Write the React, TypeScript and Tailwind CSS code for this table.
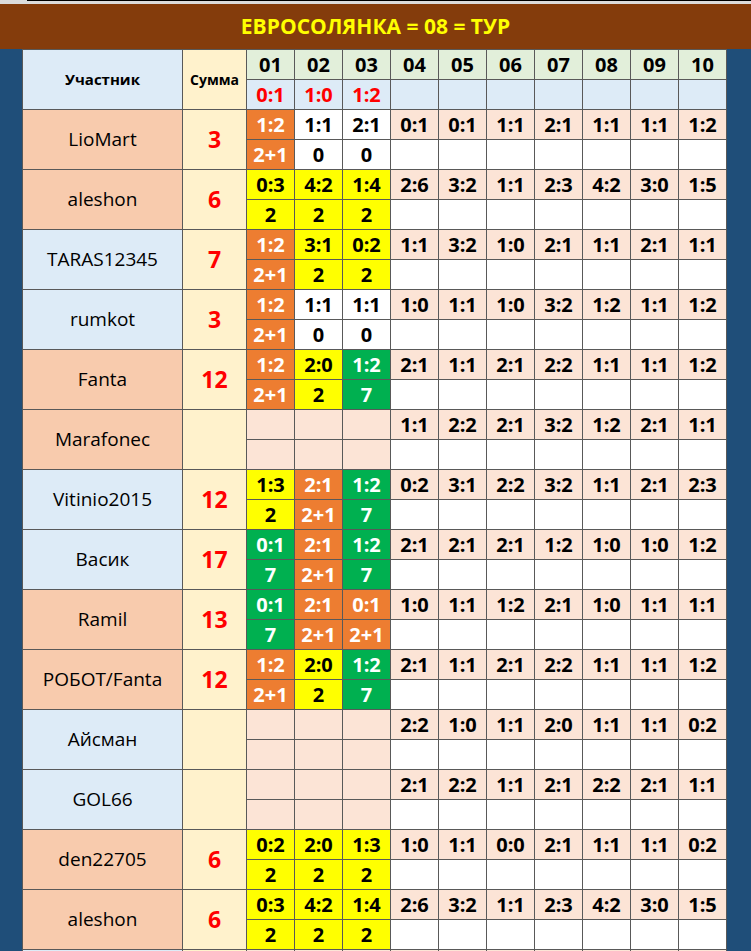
import React from "react";

type Row = {
  name: string;
  sum: string;
  peach: boolean;
  first: [string, string][] | null;
  rest: string[];
};

const rows: Row[] = [
  { name: "LioMart", sum: "3", peach: true, first: [["1:2", "2+1"], ["1:1", "0"], ["2:1", "0"]], rest: ["0:1", "0:1", "1:1", "2:1", "1:1", "1:1", "1:2"] },
  { name: "aleshon", sum: "6", peach: true, first: [["0:3", "2"], ["4:2", "2"], ["1:4", "2"]], rest: ["2:6", "3:2", "1:1", "2:3", "4:2", "3:0", "1:5"] },
  { name: "TARAS12345", sum: "7", peach: false, first: [["1:2", "2+1"], ["3:1", "2"], ["0:2", "2"]], rest: ["1:1", "3:2", "1:0", "2:1", "1:1", "2:1", "1:1"] },
  { name: "rumkot", sum: "3", peach: false, first: [["1:2", "2+1"], ["1:1", "0"], ["1:1", "0"]], rest: ["1:0", "1:1", "1:0", "3:2", "1:2", "1:1", "1:2"] },
  { name: "Fanta", sum: "12", peach: true, first: [["1:2", "2+1"], ["2:0", "2"], ["1:2", "7"]], rest: ["2:1", "1:1", "2:1", "2:2", "1:1", "1:1", "1:2"] },
  { name: "Marafonec", sum: "", peach: true, first: null, rest: ["1:1", "2:2", "2:1", "3:2", "1:2", "2:1", "1:1"] },
  { name: "Vitinio2015", sum: "12", peach: false, first: [["1:3", "2"], ["2:1", "2+1"], ["1:2", "7"]], rest: ["0:2", "3:1", "2:2", "3:2", "1:1", "2:1", "2:3"] },
  { name: "Васик", sum: "17", peach: false, first: [["0:1", "7"], ["2:1", "2+1"], ["1:2", "7"]], rest: ["2:1", "2:1", "2:1", "1:2", "1:0", "1:0", "1:2"] },
  { name: "Ramil", sum: "13", peach: true, first: [["0:1", "7"], ["2:1", "2+1"], ["0:1", "2+1"]], rest: ["1:0", "1:1", "1:2", "2:1", "1:0", "1:1", "1:1"] },
  { name: "РОБОТ/Fanta", sum: "12", peach: true, first: [["1:2", "2+1"], ["2:0", "2"], ["1:2", "7"]], rest: ["2:1", "1:1", "2:1", "2:2", "1:1", "1:1", "1:2"] },
  { name: "Айсман", sum: "", peach: false, first: null, rest: ["2:2", "1:0", "1:1", "2:0", "1:1", "1:1", "0:2"] },
  { name: "GOL66", sum: "", peach: false, first: null, rest: ["2:1", "2:2", "1:1", "2:1", "2:2", "2:1", "1:1"] },
  { name: "den22705", sum: "6", peach: true, first: [["0:2", "2"], ["2:0", "2"], ["1:3", "2"]], rest: ["1:0", "1:1", "0:0", "2:1", "1:1", "1:1", "0:2"] },
  { name: "aleshon", sum: "6", peach: true, first: [["0:3", "2"], ["4:2", "2"], ["1:4", "2"]], rest: ["2:6", "3:2", "1:1", "2:3", "4:2", "3:0", "1:5"] },
  { name: "", sum: "", peach: false, first: null, rest: ["", "", "", "", "", "", ""] },
];

function pointClass(p: string): string {
  if (p === "2+1") return "bg-[#ed7d31] text-white";
  if (p === "2") return "bg-[#ffff00] text-black";
  if (p === "7") return "bg-[#00b050] text-white";
  return "bg-white text-black";
}

const cell = "flex items-center justify-center";
const pred = "flex items-center justify-center font-bold text-[20px] leading-none";

export default function App() {
  return (
    <div
      className="w-[751px] h-[951px] overflow-hidden bg-[#1f4e79]"
      style={{ fontFamily: '"Open Sans", "Noto Sans", sans-serif' }}
    >
      <div className="h-[4px] bg-[#dcdcdc] flex">
        <div className="w-[27px]" />
        <div className="flex-1 h-px bg-black" />
      </div>
      <div className="h-[45px] bg-[#843c0c] flex items-center justify-center">
        <span className="text-[#ffff00] font-bold text-[21px] leading-none">
          ЕВРОСОЛЯНКА = 08 = ТУР
        </span>
      </div>
      <div className="flex">
        <div className="w-[22px] shrink-0" />
        <div className="grid grid-cols-[159px_63px_repeat(10,47px)] auto-rows-[29px] gap-px p-px bg-[#595959] w-[705px] shrink-0">
          <div className={`${cell} row-span-2 bg-[#ddebf7] font-bold text-[15px] text-black`}>Участник</div>
          <div className={`${cell} row-span-2 bg-[#fff2cc] font-bold text-[14px] text-black`}>Сумма</div>
          {["01", "02", "03", "04", "05", "06", "07", "08", "09", "10"].map((h) => (
            <div key={h} className={`${pred} bg-[#e2efda] text-black`}>{h}</div>
          ))}
          {["0:1", "1:0", "1:2", "", "", "", "", "", "", ""].map((r, i) => (
            <div key={"r" + i} className={`${pred} bg-[#ddebf7] text-[#ff0000]`}>{r}</div>
          ))}
          {rows.map((row, ri) => (
            <React.Fragment key={ri}>
              <div
                className={`${cell} row-span-2 text-[19px] text-black ${row.peach ? "bg-[#f8cbad]" : "bg-[#ddebf7]"}`}
              >
                {row.name}
              </div>
              <div className={`${cell} row-span-2 bg-[#fff2cc] text-[#ff0000] font-bold text-[23px]`}>
                {row.sum}
              </div>
              {[0, 1, 2].map((c) =>
                row.first ? (
                  <div key={"a" + c} className={`${pred} ${pointClass(row.first[c][1])}`}>
                    {row.first[c][0]}
                  </div>
                ) : (
                  <div key={"a" + c} className="bg-[#fce4d6]" />
                )
              )}
              {row.rest.map((p, c) => (
                <div key={"b" + c} className={`${pred} bg-[#fce4d6] text-black`}>{p}</div>
              ))}
              {[0, 1, 2].map((c) =>
                row.first ? (
                  <div key={"c" + c} className={`${pred} ${pointClass(row.first[c][1])}`}>
                    {row.first[c][1]}
                  </div>
                ) : (
                  <div key={"c" + c} className="bg-[#fce4d6]" />
                )
              )}
              {row.rest.map((_, c) => (
                <div key={"d" + c} className="bg-white" />
              ))}
            </React.Fragment>
          ))}
        </div>
        <div className="flex-1" />
      </div>
    </div>
  );
}
